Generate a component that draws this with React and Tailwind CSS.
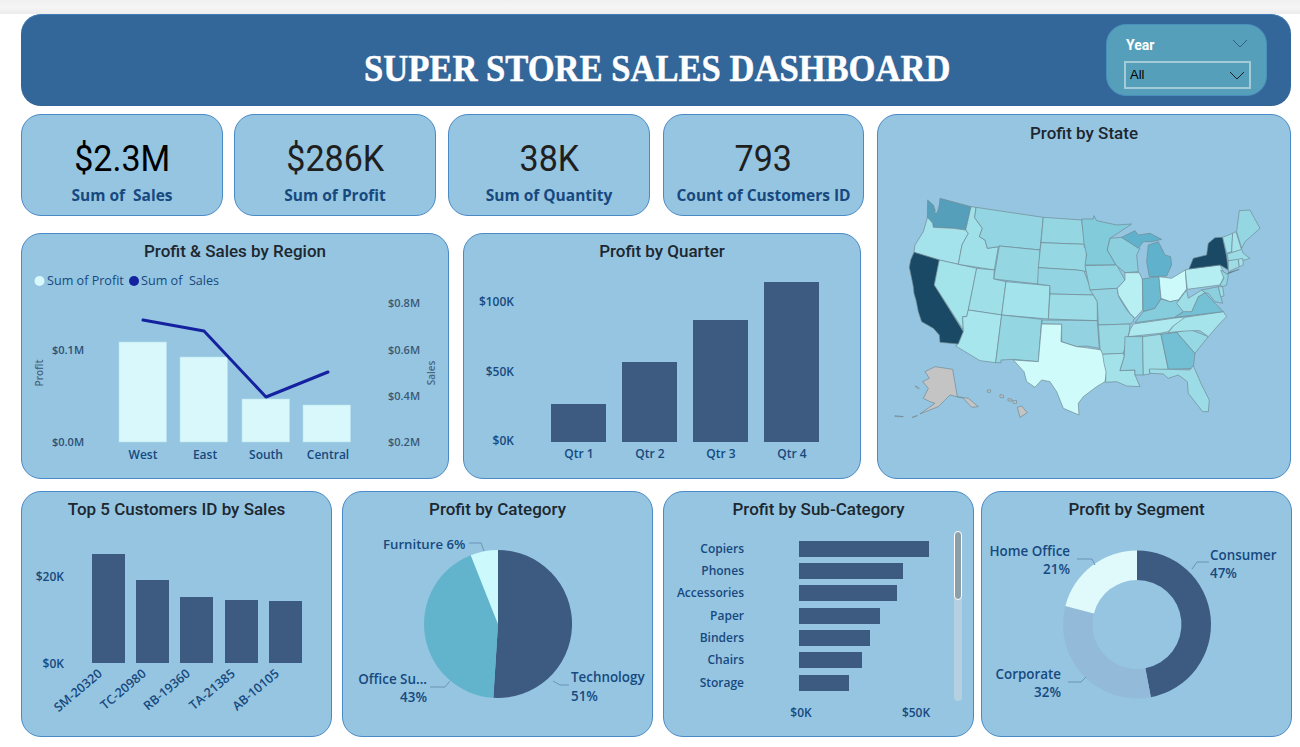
import React from "react";

const NAVY = "#17497f";
const BAR = "#3d5a80";
const LABEL_FONT = "'Open Sans','Noto Sans',sans-serif";

function Card({ className = "", children }) {
  return (
    <div className={"rounded-[20px] border border-[#4a8ac6] bg-[#95c5e0] overflow-hidden " + className}>
      {children}
    </div>
  );
}

function Title({ children, h = "h-[34px]" }) {
  return (
    <div className={"flex items-center justify-center pt-[2px] text-[17px] font-medium text-[#1d2730] font-['Roboto',sans-serif] " + h}>
      {children}
    </div>
  );
}

function Plot({ x, y, w, h, children }) {
  return (
    <svg width={w} height={h} viewBox={`${x} ${y} ${w} ${h}`} className="block" style={{ fontFamily: LABEL_FONT }}>
      {children}
    </svg>
  );
}

function Kpi({ value, label, className = "", color = "text-[#1f1f1f]" }) {
  return (
    <Card className={"h-[102px] w-[202px] flex flex-col items-center pt-[24px] " + className}>
      <div className={"text-[37px] leading-[40px] scale-x-[0.92] font-['Roboto',sans-serif] " + color}>{value}</div>
      <div className="mt-[6px] text-[15.5px] leading-[20px] font-bold text-[#17497f] font-['Open_Sans',sans-serif] whitespace-pre">
        {label}
      </div>
    </Card>
  );
}

function T({ x, y, a = "start", s = 12, w = 600, c = NAVY, children, ...p }) {
  return (
    <text x={x} y={y} textAnchor={a} fontSize={s} fontWeight={w} fill={c} {...p}>
      {children}
    </text>
  );
}

function slice(cx, cy, r, r0, from, to) {
  const pt = (rad, f) => {
    const t = (f * 2 - 0.5) * Math.PI;
    return `${(cx + rad * Math.cos(t)).toFixed(2)} ${(cy + rad * Math.sin(t)).toFixed(2)}`;
  };
  const large = to - from > 0.5 ? 1 : 0;
  if (!r0) return `M${cx} ${cy}L${pt(r, from)}A${r} ${r} 0 ${large} 1 ${pt(r, to)}Z`;
  return `M${pt(r, from)}A${r} ${r} 0 ${large} 1 ${pt(r, to)}L${pt(r0, to)}A${r0} ${r0} 0 ${large} 0 ${pt(r0, from)}Z`;
}

const STATES = [
  ["#559fbb", "180,25 273,50 257,120 220,115 180,113 160,112 158,100 148,88 142,83 143,30 160,45 166,62 162,70 172,68 178,45"],
  ["#a5e3ec", "142,83 148,88 158,100 160,112 180,113 220,115 257,120 265,130 246,165 235,223 178,210 102,187 105,165 130,125"],
  ["#1a4966", "102,187 178,210 163,285 250,425 235,462 180,457 178,435 160,415 125,395 115,365 108,330 102,310 100,290 95,265 88,232 92,210"],
  ["#a3e3ea", "178,210 290,235 265,360 260,380 248,380 250,420 163,285"],
  ["#a0e0e9", "273,50 288,52 284,83 307,115 298,140 315,150 322,175 355,170 343,240 235,223 246,165 265,130 257,120"],
  ["#93d5e2", "288,52 490,82 480,180 358,168 355,170 322,175 315,150 298,140 307,115 284,83"],
  ["#94d7e3", "358,168 480,180 474,282 341,267"],
  ["#9fdfe8", "290,235 343,240 341,267 378,275 365,375 265,360"],
  ["#a7e6ed", "265,360 365,375 347,518 300,512 227,468 235,462 250,425 248,380 260,380"],
  ["#a3e4ec", "378,275 510,287 505,387 365,375"],
  ["#94d7e3", "365,375 485,388 475,515 400,508 363,510 363,518 347,518"],
  ["#94d7e3", "490,82 605,90 615,163 483,158"],
  ["#95d8e3", "483,158 615,163 612,170 620,178 617,245 590,240 475,233"],
  ["#93d4e2", "475,233 590,240 612,243 630,290 640,315 510,312 510,287 473,282"],
  ["#9cdce6", "510,312 640,315 652,335 652,392 505,387"],
  ["#92d2e1", "487,390 652,392 658,475 620,468 590,470 545,455 545,403 485,402"],
  ["#cffcfb", "485,402 545,403 543,455 590,470 610,472 665,480 672,495 680,545 675,575 650,590 610,620 595,640 597,675 550,655 530,605 510,575 485,570 465,592 440,575 432,545 400,510 475,515"],
  ["#82cbdb", "605,87 640,87 642,77 650,92 710,105 755,102 690,145 682,180 708,225 615,225 620,195 612,160"],
  ["#92d5e2", "615,227 710,225 735,270 712,295 630,300 625,275"],
  ["#93d3e1", "630,300 712,295 716,320 740,360 763,385 760,395 750,402 655,405 652,335 640,315"],
  ["#97d8e3", "655,405 750,402 748,425 730,490 668,493 660,475"],
  ["#a4e2ea", "668,493 730,490 733,500 720,542 765,540 765,555 780,590 740,588 710,575 677,577 678,545 672,520"],
  ["#8ccfdf", "690,145 725,142 780,175 770,195 775,245 735,248 708,225 682,180"],
  ["#b8eff3", "735,248 778,248 788,270 788,360 765,385 750,370 715,315 712,295 735,270"],
  ["#60b2cc", "725,142 765,122 775,135 810,130 845,148 815,155 790,155 775,175"],
  ["#60b2cc", "805,165 835,155 855,195 872,200 875,225 860,258 808,260 800,215"],
  ["#6cbad1", "787,267 837,260 843,327 825,355 790,365"],
  ["#ccfafa", "837,260 875,265 916,240 920,297 895,330 870,335 843,325"],
  ["#85ccdd", "765,398 790,365 825,355 843,327 870,335 895,330 910,365 885,382"],
  ["#ade9ef", "760,402 885,384 928,380 880,408 865,425 840,430 745,440 750,420"],
  ["#93d4e2", "735,440 788,440 790,555 765,555 765,540 720,542 733,500"],
  ["#9edde6", "788,440 843,433 865,538 808,540 810,552 790,555"],
  ["#73c0d4", "843,433 890,427 945,490 940,535 865,538"],
  ["#9bdce6", "808,537 865,538 930,540 940,527 965,585 988,630 985,665 968,665 925,610 922,575 895,555 865,565 850,552 810,550"],
  ["#96d8e3", "890,427 930,418 985,440 945,490"],
  ["#a6e4ec", "915,382 1030,365 1040,380 1020,400 985,440 960,422 935,422 890,425 865,428 880,408"],
  ["#74c1d5", "885,382 915,362 935,365 955,320 975,308 1010,345 1030,365"],
  ["#9ddee7", "890,340 920,300 925,325 965,300 975,308 955,320 935,365 910,365"],
  ["#b4eef2", "916,240 927,237 1020,225 1035,255 1020,285 922,298"],
  ["#1a4966", "927,237 940,205 980,195 985,160 1005,143 1028,142 1040,200 1045,240 1020,225"],
  ["#1a4966", "1042,252 1078,238 1045,248"],
  ["#92d5e2", "1022,240 1045,255 1040,285 1028,290 1020,285 1032,265"],
  ["#8ccfdf", "965,300 1015,290 1028,340 1005,335 985,310 975,308"],
  ["#9bdce6", "1015,290 1028,290 1032,318 1022,320"],
  ["#a0e0e9", "1028,142 1058,130 1055,185 1040,190"],
  ["#a5e3ec", "1058,130 1068,125 1085,180 1055,188"],
  ["#94d7e3", "1070,125 1078,62 1110,60 1140,115 1095,155 1085,175"],
  ["#9cdce6", "1042,192 1085,178 1090,190 1110,205 1095,210 1045,212"],
  ["#9edde6", "1045,212 1075,208 1078,230 1045,245"],
  ["#a5e3ec", "1075,208 1088,205 1090,225 1078,230"],
  ["#c4c4c4", "135,545 165,530 218,538 232,620 265,625 295,650 275,652 250,625 210,615 175,650 120,672 165,640 150,635 130,625 145,595 128,575 148,565"],
  ["#c4c4c4", "412,652 425,648 442,668 420,682"],
  ["#c4c4c4", "360,614 370,616 371,624 360,622"],
  ["#c4c4c4", "384,626 396,628 394,634 384,632"],
  ["#c4c4c4", "398,632 410,632 410,640 400,640"],
  ["#c4c4c4", "322,600 332,600 331,607 323,607"],
  ["#c4c4c4", "45,677 70,680 45,680"],
  ["#c4c4c4", "97,681 112,677 98,683"],
  ["#c4c4c4", "105,588 112,590 118,595 110,594"],
];

function Chevron({ className }) {
  return (
    <svg width="16" height="9" viewBox="0 0 16 9" className={className} fill="none" stroke="currentColor" strokeWidth="1">
      <path d="M1 1l7 7 7-7" />
    </svg>
  );
}

export default function App() {
  return (
    <div className="w-[1300px] h-[747px] bg-white overflow-hidden">
      <div className="h-[14px] bg-gradient-to-b from-[#f0f0f0] via-[#f6f6f6] to-[#ececec]" />
      <div className="pl-[21px]">
        {/* Header */}
        <div className="h-[92px] w-[1270px] rounded-[20px] border-t border-[#3f7cb8] bg-[#336699] flex">
          <div className="w-[1085px] pt-[31px] pl-[187px] flex justify-center">
            <div className="text-[38px] leading-[44px] font-bold text-white font-['Liberation_Serif',serif] whitespace-nowrap scale-x-[0.91] [-webkit-text-stroke:0.5px_white]">
              SUPER STORE SALES DASHBOARD
            </div>
          </div>
          <div className="mt-[9px] h-[72px] w-[161px] rounded-[20px] border border-[#4a90bd] bg-[#559fbb] px-[17px] pt-[10px]">
            <div className="flex items-start justify-between pl-[2px] pr-[1px] h-[26px]">
              <span className="text-[14px] leading-[20px] font-bold text-white font-['Roboto',sans-serif]">Year</span>
              <Chevron className="text-[#33627f] mt-[4px]" />
            </div>
            <div className="h-[28px] w-[127px] border-2 border-[#a3cbd8] flex items-center justify-between pl-[4px] pr-[4px]">
              <span className="text-[13px] text-black font-['Liberation_Sans',sans-serif]">All</span>
              <Chevron className="text-[#10202a]" />
            </div>
          </div>
        </div>

        {/* Middle */}
        <div className="mt-[8px] flex">
          <div className="w-[843px]">
            <div className="flex">
              <Kpi value="$2.3M" label="Sum of  Sales" color="text-black" />
              <Kpi value="$286K" label="Sum of Profit" className="ml-[11px]" />
              <Kpi value="38K" label="Sum of Quantity" className="ml-[12px]" />
              <Kpi value="793" label="Count of Customers ID" className="ml-[13px] !w-[201px]" />
            </div>
            <div className="mt-[17px] flex">
              <Card className="w-[428px] h-[246px]">
                <Title>Profit &amp; Sales by Region</Title>
                <Plot x={22} y={268} w={426} h={210}>
                  <circle cx="39.5" cy="281" r="5" fill="#d9f8fb" />
                  <T x={47} y={285} s={12.6} w={500}>Sum of Profit</T>
                  <circle cx="134" cy="281" r="5" fill="#1522a0" />
                  <T x={141} y={285} s={12.6} w={500} xmlSpace="preserve">Sum of  Sales</T>
                  {[["$0.8M", 307], ["$0.6M", 354], ["$0.4M", 400], ["$0.2M", 446]].map(([t, y]) => (
                    <T key={t} x={388} y={y} s={11} c="#3b5876">{t}</T>
                  ))}
                  {[["$0.1M", 354], ["$0.0M", 446]].map(([t, y]) => (
                    <T key={t} x={52} y={y} s={11} c="#2c5078">{t}</T>
                  ))}
                  <T x={0} y={0} a="middle" s={10} c="#4a6782" transform="translate(43 373) rotate(-90)">Profit</T>
                  <T x={0} y={0} a="middle" s={10} c="#4a6782" transform="translate(435 373) rotate(-90)">Sales</T>
                  {[[119, 342], [180, 357], [242, 399], [303, 405]].map(([x, y]) => (
                    <rect key={x} x={x} y={y} width="47.5" height={442 - y} fill="#d9f8fb" stroke="#b7e3ef" strokeWidth="0.6" />
                  ))}
                  <polyline points="143,320 204,331 266,397 328,372" fill="none" stroke="#1522a0" strokeWidth="3" strokeLinecap="round" strokeLinejoin="round" />
                  {[["West", 143], ["East", 205], ["South", 266], ["Central", 328]].map(([t, x]) => (
                    <T key={t} x={x} y={459} a="middle" s={12}>{t}</T>
                  ))}
                </Plot>
              </Card>
              <Card className="ml-[14px] w-[398px] h-[246px]">
                <Title>Profit by Quarter</Title>
                <Plot x={464} y={268} w={396} h={210}>
                  {[["$100K", 306], ["$50K", 376], ["$0K", 445]].map(([t, y]) => (
                    <T key={t} x={514} y={y} a="end" s={12}>{t}</T>
                  ))}
                  {[[551, 404], [622, 362], [693, 320], [764, 282]].map(([x, y]) => (
                    <rect key={x} x={x} y={y} width="55" height={442 - y} fill={BAR} />
                  ))}
                  {[["Qtr 1", 579], ["Qtr 2", 650], ["Qtr 3", 721], ["Qtr 4", 792]].map(([t, x]) => (
                    <T key={t} x={x} y={458} a="middle" s={12}>{t}</T>
                  ))}
                </Plot>
              </Card>
            </div>
          </div>
          <Card className="ml-[13px] w-[414px] h-[365px]">
            <Title h="h-[36px]">Profit by State</Title>
            <Plot x={878} y={151} w={412} h={310}>
              <g transform="translate(880 190) scale(0.3333)">
                {STATES.map(([f, p], i) => (
                  <polygon key={i} points={p} fill={f} stroke="#6f8891" strokeWidth="2" strokeLinejoin="round" />
                ))}
              </g>
            </Plot>
          </Card>
        </div>

        {/* Bottom */}
        <div className="mt-[12px] flex">
          <Card className="w-[311px] h-[246px]">
            <Title>Top 5 Customers ID by Sales</Title>
            <Plot x={22} y={526} w={309} h={210}>
              <T x={64} y={581} a="end" s={12}>$20K</T>
              <T x={64} y={668} a="end" s={12}>$0K</T>
              {[[92, 554], [136, 580], [180, 597], [225, 600], [269, 601]].map(([x, y]) => (
                <rect key={x} x={x} y={y} width="33" height={663 - y} fill={BAR} />
              ))}
              {[["SM-20320", 103], ["TC-20980", 147], ["RB-19360", 191], ["TA-21385", 236], ["AB-10105", 280]].map(([t, x]) => (
                <T key={t} x={0} y={0} a="end" s={12.5} transform={`translate(${x} 675) rotate(-40)`}>{t}</T>
              ))}
            </Plot>
          </Card>
          <Card className="ml-[10px] w-[311px] h-[246px]">
            <Title>Profit by Category</Title>
            <Plot x={343} y={526} w={309} h={210}>
              <path d={slice(498, 624, 74, 0, 0, 0.51)} fill={BAR} />
              <path d={slice(498, 624, 74, 0, 0.51, 0.94)} fill="#62b3cc" />
              <path d={slice(498, 624, 74, 0, 0.94, 1)} fill="#ccf9fb" />
              <T x={383} y={549} s={13.2}>Furniture 6%</T>
              <polyline points="469,543 481,543 484,551" fill="none" stroke="#6d94b5" />
              <T x={571} y={682} s={13.4}>Technology</T>
              <T x={571} y={701} s={13.4}>51%</T>
              <polyline points="553,681 560,685 569,685" fill="none" stroke="#6d94b5" />
              <T x={427} y={684} a="end" s={13.4}>Office Su...</T>
              <T x={427} y={702} a="end" s={13.4}>43%</T>
              <polyline points="430,687 445,687 450,681" fill="none" stroke="#6d94b5" />
            </Plot>
          </Card>
          <Card className="ml-[10px] w-[311px] h-[246px]">
            <Title>Profit by Sub-Category</Title>
            <Plot x={664} y={526} w={309} h={210}>
              {[["Copiers", 541, 929], ["Phones", 563, 903], ["Accessories", 585, 897], ["Paper", 608, 880], ["Binders", 630, 870], ["Chairs", 652, 862], ["Storage", 675, 849]].map(([t, y, e]) => (
                <g key={t}>
                  <T x={744} y={y + 12} a="end" s={12}>{t}</T>
                  <rect x={799} y={y} width={e - 799} height="16" fill={BAR} />
                </g>
              ))}
              <T x={801} y={717} a="middle" s={12}>$0K</T>
              <T x={916} y={717} a="middle" s={12}>$50K</T>
              <rect x={954} y={531} width="8" height="170" rx="4" fill="#b5d0e0" />
              <rect x={954.5} y={531.5} width="7" height="68" rx="3.5" fill="#8a9fa8" stroke="#ffffff" />
            </Plot>
          </Card>
          <Card className="ml-[7px] w-[311px] h-[246px]">
            <Title>Profit by Segment</Title>
            <Plot x={982} y={526} w={309} h={210}>
              <path d={slice(1137, 624.5, 74, 44.5, 0, 0.47)} fill={BAR} />
              <path d={slice(1137, 624.5, 74, 44.5, 0.47, 0.79)} fill="#93bbd9" />
              <path d={slice(1137, 624.5, 74, 44.5, 0.79, 1)} fill="#e0fafc" />
              <T x={1070} y={556} a="end" s={13.4}>Home Office</T>
              <T x={1070} y={574} a="end" s={13.4}>21%</T>
              <polyline points="1077,559 1092,559 1095,565" fill="none" stroke="#6d94b5" />
              <T x={1210} y={560} s={13.4}>Consumer</T>
              <T x={1210} y={578} s={13.4}>47%</T>
              <polyline points="1209,562 1197,562 1192,569" fill="none" stroke="#6d94b5" />
              <T x={1061} y={679} a="end" s={13.4}>Corporate</T>
              <T x={1061} y={697} a="end" s={13.4}>32%</T>
              <polyline points="1068,682 1081,682 1086,677" fill="none" stroke="#6d94b5" />
            </Plot>
          </Card>
        </div>
      </div>
    </div>
  );
}
